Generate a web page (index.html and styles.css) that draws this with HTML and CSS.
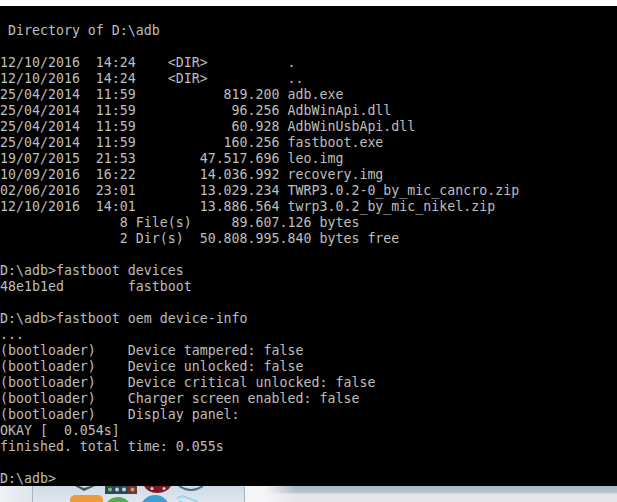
FILE: index.html
```html
<!DOCTYPE html>
<html lang="en">
<head>
<meta charset="utf-8">
<title>Command Prompt</title>
<link rel="stylesheet" href="styles.css">
</head>
<body>
<div class="top-edge"></div>
<pre class="console">

 Directory of D:\adb

12/10/2016  14:24    &lt;DIR&gt;          .
12/10/2016  14:24    &lt;DIR&gt;          ..
25/04/2014  11:59           819.200 adb.exe
25/04/2014  11:59            96.256 AdbWinApi.dll
25/04/2014  11:59            60.928 AdbWinUsbApi.dll
25/04/2014  11:59           160.256 fastboot.exe
19/07/2015  21:53        47.517.696 leo.img
10/09/2016  16:22        14.036.992 recovery.img
02/06/2016  23:01        13.029.234 TWRP3.0.2-0_by_mic_cancro.zip
12/10/2016  14:01        13.886.564 twrp3.0.2_by_mic_nikel.zip
               8 File(s)     89.607.126 bytes
               2 Dir(s)  50.808.995.840 bytes free

D:\adb&gt;fastboot devices
48e1b1ed        fastboot

D:\adb&gt;fastboot oem device-info
...
(bootloader)    Device tampered: false
(bootloader)    Device unlocked: false
(bootloader)    Device critical unlocked: false
(bootloader)    Charger screen enabled: false
(bootloader)    Display panel:
OKAY [  0.054s]
finished. total time: 0.055s

D:\adb&gt;</pre>
<div class="desktop">
  <div class="desktop-left"></div>
  <div class="desktop-dock">
    <svg class="dock-icons" viewBox="0 0 212 16" width="212" height="16" aria-hidden="true">
      <path d="M42 0 L51 5 L62 0 L58 0 L51 2 L46 0 Z" fill="#46565a"/>
      <rect x="37" y="9" width="33" height="12" rx="5" fill="#ee9a3c"/>
      <rect x="72" y="0" width="32" height="8" fill="#2c4a50"/>
      <circle cx="77" cy="3.5" r="2" fill="#6fbe6a"/>
      <circle cx="84" cy="3.5" r="2" fill="#b8d0f0"/>
      <circle cx="91" cy="3.5" r="2" fill="#c8d4f0"/>
      <rect x="95" y="0" width="9" height="8" fill="#6a3a30"/>
      <circle cx="99.500" cy="3.5" r="2" fill="#e09050"/>
      <circle cx="85" cy="25" r="14" fill="#55ad4c"/>
      <path d="M111 0 H138 Q134 7 124 7 Q115 7 111 0 Z" fill="#7a1c28"/>
      <circle cx="119" cy="2.500" r="1.500" fill="#e8d0d0"/>
      <circle cx="131" cy="2.500" r="1.500" fill="#e8d0d0"/>
      <circle cx="122" cy="24" r="15" fill="#3a9fd6"/>
      <path d="M146 0 Q158 8 170 0" fill="none" stroke="#4c7288" stroke-width="2"/>
      <path d="M144 12 L150 10 L165 16 M146 15 L158 20" fill="none" stroke="#a4d0e8" stroke-width="2"/>
    </svg>
  </div>
  <div class="desktop-right">
    <div class="desktop-fade"></div>
  </div>
</div>
</body>
</html>
```

FILE: styles.css
```css
html, body {
  margin: 0;
  padding: 0;
  height: 100%;
  overflow: hidden;
  background: #fff;
}
body {
  display: flex;
  flex-direction: column;
}
.top-edge {
  height: 6px;
  background: #fff;
}
.console {
  margin: 0;
  box-sizing: border-box;
  height: 480px;
  padding-top: 1px;
  overflow: hidden;
  background: #000;
  color: #bebebe;
  font-family: "DejaVu Sans Mono", "Liberation Mono", monospace;
  font-size: 13.28px;
  line-height: 16px;
}
.desktop {
  display: flex;
  flex: 1;
  min-height: 0;
}
.desktop-left {
  width: 33px;
  background: linear-gradient(90deg, #eef1f5, #dfe5ec);
  border-right: 1px solid #a9b4c0;
  box-sizing: border-box;
}
.desktop-dock {
  width: 212px;
  background: linear-gradient(#cfdbe8, #dfe7f0);
  border-right: 1px solid #aab3bc;
  box-sizing: border-box;
  overflow: hidden;
}
.dock-icons {
  display: block;
}
.desktop-right {
  flex: 1;
  background: linear-gradient(#aebbc6 0, #b4c0ca 6px, #c8cdd0 7px, #e3e5ea 8px, #e6e7eb 100%);
}
.desktop-fade {
  width: 50px;
  height: 100%;
  background: linear-gradient(90deg, #f4f5f7 40%, rgba(244, 245, 247, 0));
}
```
